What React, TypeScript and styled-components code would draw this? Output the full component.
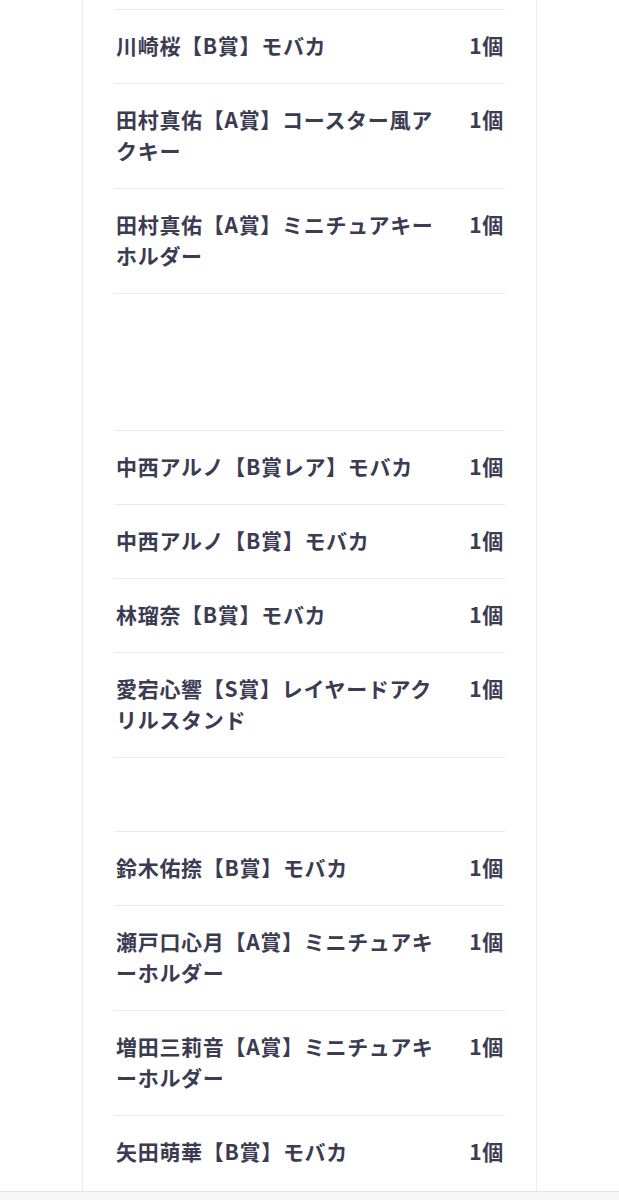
import styled, { createGlobalStyle } from 'styled-components';

const GlobalStyle = createGlobalStyle`
  html, body {
    margin: 0;
    padding: 0;
    background: #ffffff;
  }
  body {
    font-family: "Noto Sans CJK JP", "Noto Sans", sans-serif;
  }
`;

interface Prize {
  name?: string;
  qty?: string;
  blank?: number;
}

const prizes: Prize[] = [
  { name: '川崎桜【B賞】モバカ', qty: '1個' },
  { name: '田村真佑【A賞】コースター風アクキー', qty: '1個' },
  { name: '田村真佑【A賞】ミニチュアキーホルダー', qty: '1個' },
  { blank: 136 },
  { name: '中西アルノ【B賞レア】モバカ', qty: '1個' },
  { name: '中西アルノ【B賞】モバカ', qty: '1個' },
  { name: '林瑠奈【B賞】モバカ', qty: '1個' },
  { name: '愛宕心響【S賞】レイヤードアクリルスタンド', qty: '1個' },
  { blank: 73 },
  { name: '鈴木佑捺【B賞】モバカ', qty: '1個' },
  { name: '瀬戸口心月【A賞】ミニチュアキーホルダー', qty: '1個' },
  { name: '増田三莉音【A賞】ミニチュアキーホルダー', qty: '1個' },
  { name: '矢田萌華【B賞】モバカ', qty: '1個' },
];

const App = () => {
  return (
    <Page>
      <GlobalStyle />
      <Card>
        <List>
          <CutRow />
          {prizes.map((p, i) =>
            p.blank ? (
              <BlankRow key={i} h={p.blank} />
            ) : (
              <Row key={i} last={i === prizes.length - 1}>
                <Name>{p.name}</Name>
                <Qty>{p.qty}</Qty>
              </Row>
            )
          )}
        </List>
      </Card>
      <Footer />
    </Page>
  );
};

const Page = styled.div`
  width: 619px;
  min-height: 1200px;
  display: flex;
  flex-direction: column;
  background: #ffffff;
`;

const Card = styled.section`
  margin-left: 82px;
  width: 455px;
  box-sizing: border-box;
  padding: 0 31px;
  border-left: 1px solid #ececef;
  border-right: 1px solid #ececef;
  background: #ffffff;
`;

const List = styled.ul`
  list-style: none;
  margin: 0;
  padding: 0;
`;

const CutRow = styled.li`
  height: 9px;
  border-bottom: 1px solid #ebebee;
`;

const BlankRow = styled.li<{ h: number }>`
  height: ${p => p.h}px;
  border-bottom: 1px solid #ebebee;
`;

const Row = styled.li<{ last?: boolean }>`
  display: grid;
  grid-template-columns: 1fr auto;
  column-gap: 30px;
  align-items: start;
  padding: 20px 0 ${p => (p.last ? 24 : 22)}px 2px;
  border-bottom: ${p => (p.last ? 'none' : '1px solid #ebebee')};
  color: #3b3b52;
  font-size: 21px;
  font-weight: 700;
  line-height: 31px;
  letter-spacing: 0.7px;
`;

const Name = styled.span`
  line-break: loose;
  word-break: normal;
`;

const Qty = styled.span`
  white-space: nowrap;
  padding-right: 1px;
`;

const Footer = styled.footer`
  flex: 1;
  border-top: 1px solid #e4e4e7;
  background: #f6f6f7;
`;

export default App;
